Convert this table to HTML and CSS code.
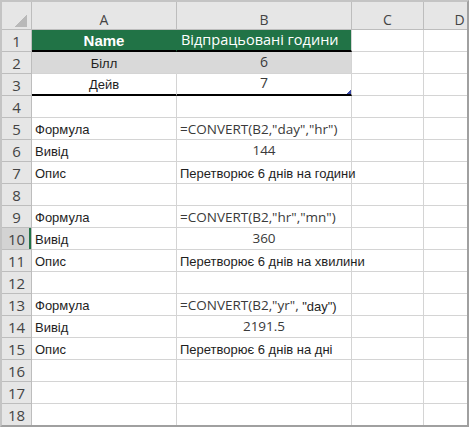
FILE: index.html
```html
<!DOCTYPE html>
<html lang="uk">
<head>
<meta charset="utf-8">
<title>CONVERT</title>
<link rel="stylesheet" href="styles.css">
</head>
<body>
<div class="sheet">
  <div class="grid">
    <div class="hd corner"></div>
    <div class="hd col">A</div>
    <div class="hd col">B</div>
    <div class="hd col">C</div>
    <div class="hd col">D</div>

    <div class="hd row">1</div>
    <div class="c title name fill-a">Name</div>
    <div class="c title hours">Відпрацьовані години</div>
    <div class="c"></div><div class="c"></div>

    <div class="hd row">2</div>
    <div class="c band ctr txt band-a">Білл</div>
    <div class="c band ctr num big">6</div>
    <div class="c"></div><div class="c"></div>

    <div class="hd row">3</div>
    <div class="c last ctr txt">Дейв</div>
    <div class="c last ctr num big handle">7</div>
    <div class="c"></div><div class="c"></div>

    <div class="hd row">4</div>
    <div class="c"></div><div class="c"></div><div class="c"></div><div class="c"></div>

    <div class="hd row">5</div>
    <div class="c txt">Формула</div>
    <div class="c num formula">=CONVERT(B2,"day","hr")</div>
    <div class="c"></div><div class="c"></div>

    <div class="hd row">6</div>
    <div class="c txt">Вивід</div>
    <div class="c num ctr">144</div>
    <div class="c"></div><div class="c"></div>

    <div class="hd row">7</div>
    <div class="c txt">Опис</div>
    <div class="c txt">Перетворює 6 днів на години</div>
    <div class="c"></div><div class="c"></div>

    <div class="hd row">8</div>
    <div class="c"></div><div class="c"></div><div class="c"></div><div class="c"></div>

    <div class="hd row">9</div>
    <div class="c txt">Формула</div>
    <div class="c num formula">=CONVERT(B2,"hr","mn")</div>
    <div class="c"></div><div class="c"></div>

    <div class="hd row active">10</div>
    <div class="c txt">Вивід</div>
    <div class="c num ctr">360</div>
    <div class="c"></div><div class="c"></div>

    <div class="hd row">11</div>
    <div class="c txt">Опис</div>
    <div class="c txt">Перетворює 6 днів на хвилини</div>
    <div class="c"></div><div class="c"></div>

    <div class="hd row">12</div>
    <div class="c"></div><div class="c"></div><div class="c"></div><div class="c"></div>

    <div class="hd row">13</div>
    <div class="c txt">Формула</div>
    <div class="c num formula">=CONVERT(B2,"yr",&nbsp;<span class="txt-in">"day")</span></div>
    <div class="c"></div><div class="c"></div>

    <div class="hd row">14</div>
    <div class="c txt">Вивід</div>
    <div class="c num ctr">2191.5</div>
    <div class="c"></div><div class="c"></div>

    <div class="hd row">15</div>
    <div class="c txt">Опис</div>
    <div class="c txt">Перетворює 6 днів на дні</div>
    <div class="c"></div><div class="c"></div>

    <div class="hd row">16</div>
    <div class="c"></div><div class="c"></div><div class="c"></div><div class="c"></div>

    <div class="hd row">17</div>
    <div class="c"></div><div class="c"></div><div class="c"></div><div class="c"></div>

    <div class="hd row">18</div>
    <div class="c"></div><div class="c"></div><div class="c"></div><div class="c"></div>
  </div>
</div>
</body>
</html>
```

FILE: styles.css
```css
html, body {
  margin: 0;
  padding: 0;
  background: #ffffff;
}

.sheet {
  box-sizing: border-box;
  width: 469px;
  height: 427px;
  overflow: hidden;
  border: 2px solid #a0a0a0;
  border-top-color: #c4c4c4;
  border-left-color: #c4c4c4;
}

.grid {
  display: grid;
  grid-template-columns: 30px 145px 175px 72px 72px;
  grid-template-rows: 28px repeat(18, 22px);
  font-family: "Liberation Sans", Arial, sans-serif;
}

.grid > div {
  box-sizing: border-box;
  border-right: 1px solid #d4d4d4;
  border-bottom: 1px solid #d4d4d4;
  display: flex;
  align-items: flex-end;
  white-space: nowrap;
  min-width: 0;
}

.hd {
  background: #e6e6e6;
  color: #444444;
  font-family: "Open Sans", "Liberation Sans", sans-serif;
  font-size: 14px;
  justify-content: center;
  align-items: center;
}

.grid > .hd {
  border-right-color: #bdbdbd;
  border-bottom-color: #bdbdbd;
}

.corner {
  background-color: #e6e6e6;
  background-image: linear-gradient(to bottom right, transparent 50%, #b9b9b9 50%);
  background-size: 13px 13px;
  background-repeat: no-repeat;
  background-position: 12px 12px;
}

.col {
  padding-top: 1px;
}

.row {
  font-size: 15px;
  padding-top: 1px;
}

.grid > .row.active {
  background: #d3d3d3;
  box-shadow: inset -2px 0 0 #217346;
}

.c {
  padding: 0 3px 1px;
  color: #1e1e1e;
  overflow: visible;
}

.ctr {
  justify-content: center;
}

.txt {
  font-family: "Liberation Sans", Arial, sans-serif;
  font-size: 13px;
  padding-bottom: 2px;
}

.num {
  font-family: "Open Sans", "Liberation Sans", sans-serif;
  font-weight: 400;
  font-size: 13.5px;
  color: #3a3a3a;
  padding-bottom: 2px;
}

.num.big {
  font-size: 14px;
}

.num.formula {
  font-size: 13.5px;
  padding-bottom: 1px;
}

.txt-in {
  font-family: "Liberation Sans", Arial, sans-serif;
  font-size: 13px;
  font-weight: 400;
  color: #1e1e1e;
}

.grid > .title {
  background: #217346;
  color: #ffffff;
  border-bottom: 2px solid #000000;
  justify-content: center;
  padding-bottom: 1px;
}

.grid > .fill-a {
  border-right-color: #217346;
}

.name {
  font-family: "Liberation Sans", Arial, sans-serif;
  font-weight: 700;
  font-size: 15px;
}

.hours {
  font-family: "Open Sans", "Liberation Sans", sans-serif;
  font-size: 14.5px;
  padding-bottom: 1px;
}

.grid > .hours {
  justify-content: flex-start;
  padding-left: 4px;
}

.grid > .band {
  background: #d9d9d9;
}

.grid > .band-a {
  border-right-color: #d9d9d9;
}

.grid > .last {
  border-bottom: 2px solid #000000;
}

.handle {
  background-image: linear-gradient(to bottom right, transparent 50%, #3a4aa8 50%);
  background-size: 4px 4px;
  background-repeat: no-repeat;
  background-position: right 0 bottom 0;
}
```
